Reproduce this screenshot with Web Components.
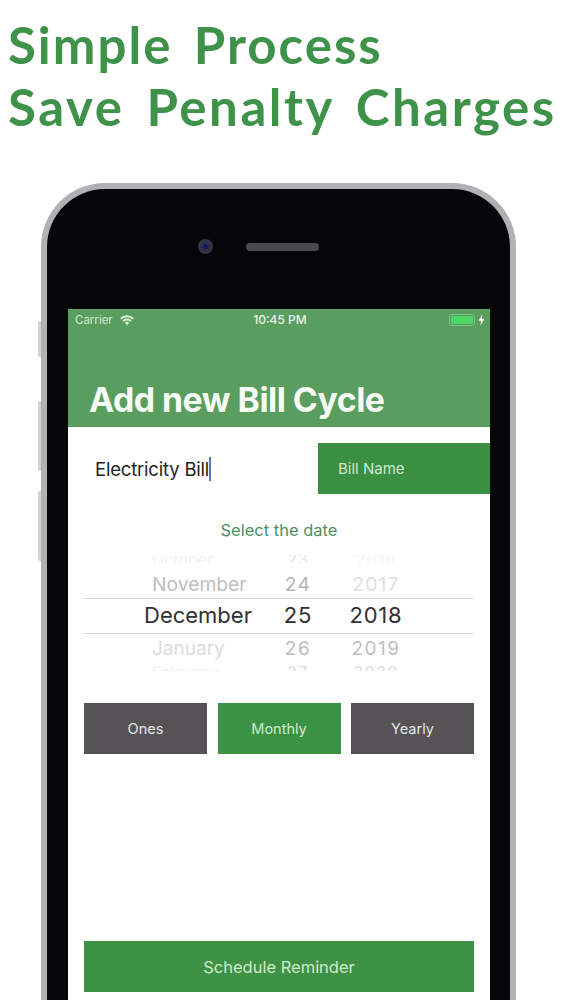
<!DOCTYPE html>
<html>
<head>
<meta charset="utf-8">
<title>Add new Bill Cycle</title>
<style>
  html, body { margin: 0; height: 1000px; overflow: hidden; background: #fff; font-family: Inter, "Liberation Sans", sans-serif; }
</style>
</head>
<body>
<promo-headline>
  <span>Simple Process</span>
  <span class="long">Save Penalty Charges</span>
</promo-headline>
<phone-frame>
  <status-bar></status-bar>
  <title-bar>Add new Bill Cycle</title-bar>
  <name-row value="Electricity Bill" label="Bill Name"></name-row>
  <date-picker label="Select the date"></date-picker>
  <repeat-choice>
    <choice-button>Ones</choice-button>
    <choice-button active>Monthly</choice-button>
    <choice-button>Yearly</choice-button>
  </repeat-choice>
  <schedule-button>Schedule Reminder</schedule-button>
</phone-frame>

<script>
// headline above the phone
class PromoHeadline extends HTMLElement {
    constructor() {
        super();
        this.attachShadow({ mode: "open" });
        this.shadowRoot.innerHTML = `
            <style>
                :host {
                    display: block;
                    height: 183px;
                    box-sizing: border-box;
                    padding: 14px 0 0 8px;
                    color: #3f9249;
                    font: 700 51px/62px Lato, "Liberation Sans", sans-serif;
                    letter-spacing: 2px;
                    word-spacing: 7px;
                }
                ::slotted(span) { display: block; white-space: nowrap; }
                ::slotted(.long) { letter-spacing: 2.55px; }
            </style>
            <slot></slot>
        `;
    }
}

class PhoneFrame extends HTMLElement {
    constructor() {
        super();
        this.attachShadow({ mode: "open" });
        this.shadowRoot.innerHTML = `
            <style>
                :host {
                    display: block;
                    position: relative;
                    width: 475px;
                    height: 817px;
                    margin-left: 41px;
                    box-sizing: border-box;
                    border: 6px solid #b1b0b4;
                    border-bottom: 0;
                    border-radius: 64px 64px 0 0;
                    background: #060608;
                }
                .bezel {
                    height: 120px;
                    display: flex;
                    align-items: center;
                    padding: 0 0 5px 151px;
                    box-sizing: border-box;
                    gap: 33px;
                }
                .cam {
                    width: 15px;
                    height: 15px;
                    border-radius: 50%;
                    background: radial-gradient(circle, #14146a 0 2px, #2c2d48 3px, #35364a 7px);
                }
                .speaker { width: 73px; height: 8px; border-radius: 4px; background: #4a4a4e; }
                .screen {
                    width: 422px;
                    height: 691px;
                    margin-left: 21px;
                    background: #fff;
                    display: flex;
                    flex-direction: column;
                }
                .side { position: absolute; left: -9px; width: 3px; background: #d2d1d5; border-radius: 2px 0 0 2px; }
            </style>
            <div class="side" style="top:132px;height:36px"></div>
            <div class="side" style="top:212px;height:70px"></div>
            <div class="side" style="top:302px;height:70px"></div>
            <div class="bezel"><div class="cam"></div><div class="speaker"></div></div>
            <div class="screen"><slot></slot></div>
        `;
    }
}

class StatusBar extends HTMLElement {
    constructor() {
        super();
        this.attachShadow({ mode: "open" });
        this.shadowRoot.innerHTML = `
            <style>
                :host {
                    display: grid;
                    grid-template-columns: 1fr auto 1fr;
                    align-items: center;
                    height: 21px;
                    padding: 0 5px 0 7px;
                    background: #5a9e5f;
                    color: #cfe9cf;
                    font: 11.5px Inter, "Liberation Sans", sans-serif;
                }
                .left, .right { display: flex; align-items: center; }
                .left { gap: 7px; }
                .right { justify-content: flex-end; gap: 3px; }
                .time { color: #e8f4e8; font-weight: 500; font-size: 12px; }
                .batt {
                    width: 26px;
                    height: 12px;
                    box-sizing: border-box;
                    border: 1px solid #74c280;
                    border-radius: 3px;
                    padding: 1px;
                    display: flex;
                }
                .batt i { flex: 1; background: #4fd667; border-radius: 2px; }
            </style>
            <div class="left">
                <span>Carrier</span>
                <svg width="14" height="10" viewBox="0 0 14 10" fill="none" stroke="#e0f4e0" stroke-width="2">
                    <path d="M.8 3.7a8.8 8.8 0 0 1 12.4 0"/>
                    <path d="M3.2 6a5.4 5.4 0 0 1 7.6 0"/>
                    <path d="M7 10 4.9 7.9a3 3 0 0 1 4.2 0z" fill="#e0f4e0" stroke="none"/>
                </svg>
            </div>
            <span class="time">10:45 PM</span>
            <div class="right">
                <div class="batt"><i></i></div>
                <svg width="7" height="12" viewBox="0 0 6 10"><path d="M3.8 0 .4 5.6h2.2L2 10l3.6-6H3.3z" fill="#eef8ee"/></svg>
            </div>
        `;
    }
}

class TitleBar extends HTMLElement {
    constructor() {
        super();
        this.attachShadow({ mode: "open" });
        this.shadowRoot.innerHTML = `
            <style>
                :host {
                    display: flex;
                    align-items: flex-end;
                    height: 97px;
                    box-sizing: border-box;
                    padding: 0 0 6px 21px;
                    background: #5a9e5f;
                    color: #f6fbf5;
                    font: 700 33.8px/42px Inter, "Liberation Sans", sans-serif;
                    letter-spacing: -.5px;
                }
            </style>
            <slot></slot>
        `;
    }
}

class NameRow extends HTMLElement {
    constructor() {
        super();
        this.attachShadow({ mode: "open" });
        this.shadowRoot.innerHTML = `
            <style>
                :host {
                    display: flex;
                    height: 51px;
                    margin-top: 16px;
                    font-family: Inter, "Liberation Sans", sans-serif;
                }
                .field {
                    width: 250px;
                    box-sizing: border-box;
                    padding-left: 27px;
                    display: flex;
                    align-items: center;
                    color: #1d1d22;
                    font-size: 18.5px;
                    letter-spacing: -.2px;
                }
                .caret { width: 2px; height: 24px; margin-left: 0; background: #5b70c4; }
                .label {
                    flex: 1;
                    display: flex;
                    align-items: center;
                    padding-left: 20px;
                    background: #3b8f43;
                    color: #cfe9d0;
                    font-size: 15px;
                }
            </style>
            <div class="field"><span>${this.getAttribute("value")}</span><span class="caret"></span></div>
            <div class="label">${this.getAttribute("label")}</div>
        `;
    }
}

// one line of the wheel, cols are month / day / year
class PickerRow extends HTMLElement {
    constructor() {
        super();
        this.attachShadow({ mode: "open" });
        const [m, d, y] = this.getAttribute("cells").split(",");
        this.shadowRoot.innerHTML = `
            <style>
                :host {
                    display: grid;
                    grid-template-columns: 175px 78px 78px;
                    align-items: center;
                    text-align: center;
                    height: var(--h, 32px);
                    overflow: hidden;
                    font-size: var(--size, 19px);
                }
                span { white-space: nowrap; transform: translateY(var(--ty, 0)); }
                .m { color: var(--mc, #333); text-align: left; padding-left: var(--ml, 68px); }
                .d { color: var(--dc, #333); letter-spacing: var(--ls, 0); }
                .y { color: var(--yc, #333); letter-spacing: var(--ls, 0); }
            </style>
            <span class="m">${m}</span><span class="d">${d}</span><span class="y">${y}</span>
        `;
    }
}

class DatePicker extends HTMLElement {
    constructor() {
        super();
        this.attachShadow({ mode: "open" });
        this.shadowRoot.innerHTML = `
            <style>
                :host {
                    display: block;
                    margin: 24px 16px 0;
                    font-family: Inter, "Liberation Sans", sans-serif;
                }
                .cap { height: 24px; line-height: 24px; text-align: center; color: #4b9062; font-size: 16.5px; }
                .wheel { margin-top: 13px; height: 116px; overflow: hidden; }
                picker-row { display: grid; }
                .clip-t { --h: 8px; --size: 16px; --mc: #f3f3f5; --dc: #e2e2e4; --yc: #f4f4f6; --ls: 1px; --ty: -6px; margin-bottom: 4px; align-items: start; }
                .n1 { --h: 28px; --size: 19.3px; --mc: #bdbdc1; --dc: #b3b3b6; --yc: #dfdfe2; --ls: 1.2px; padding-top: 3px; }
                .sel {
                    --h: 32px;
                    --size: 22px;
                    --mc: #303034; --dc: #303034; --yc: #303034; --ml: 60px; --ls: .8px;
                    padding-bottom: 2px;
                    border-top: 1px solid #d8d8dc;
                    border-bottom: 1px solid #d8d8dc;
                }
                .p1 { --h: 28px; --size: 19px; --mc: #dcdce0; --dc: #bcbcc0; --yc: #bfbfc3; --ls: 1.5px; }
                .clip-b { --h: 9px; --size: 16px; --mc: #f1f1f3; --dc: #dcdcdf; --yc: #dcdcdf; --ls: 1.5px; align-items: start; }
            </style>
            <div class="cap">${this.getAttribute("label")}</div>
            <div class="wheel">
                <picker-row class="clip-t" cells="October,23,2016"></picker-row>
                <picker-row class="n1" cells="November,24,2017"></picker-row>
                <picker-row class="sel" cells="December,25,2018"></picker-row>
                <picker-row class="p1" cells="January,26,2019"></picker-row>
                <picker-row class="clip-b" cells="February,27,2020"></picker-row>
            </div>
        `;
    }
}

class RepeatChoice extends HTMLElement {
    constructor() {
        super();
        this.attachShadow({ mode: "open" });
        this.shadowRoot.innerHTML = `
            <style>
                :host {
                    display: grid;
                    grid-template-columns: repeat(3, 1fr);
                    gap: 10.5px;
                    height: 51px;
                    margin: 32px 16px 0;
                }
            </style>
            <slot></slot>
        `;
    }
}

class ChoiceButton extends HTMLElement {
    constructor() {
        super();
        this.attachShadow({ mode: "open" });
        this.shadowRoot.innerHTML = `
            <style>
                :host {
                    display: flex;
                    align-items: center;
                    justify-content: center;
                    background: #555355;
                    color: #e6e6e6;
                    font: 14.5px Inter, "Liberation Sans", sans-serif;
                }
                :host([active]) { background: #3b9144; color: #cdeccf; }
            </style>
            <slot></slot>
        `;
    }
}

class ScheduleButton extends HTMLElement {
    constructor() {
        super();
        this.attachShadow({ mode: "open" });
        this.shadowRoot.innerHTML = `
            <style>
                :host {
                    display: flex;
                    align-items: center;
                    justify-content: center;
                    height: 51px;
                    margin: auto 16px 8px;
                    background: #3f9145;
                    color: #cdeccf;
                    font: 16.5px Inter, "Liberation Sans", sans-serif;
                }
            </style>
            <slot></slot>
        `;
    }
}

customElements.define("picker-row", PickerRow);
customElements.define("promo-headline", PromoHeadline);
customElements.define("phone-frame", PhoneFrame);
customElements.define("status-bar", StatusBar);
customElements.define("title-bar", TitleBar);
customElements.define("name-row", NameRow);
customElements.define("date-picker", DatePicker);
customElements.define("repeat-choice", RepeatChoice);
customElements.define("choice-button", ChoiceButton);
customElements.define("schedule-button", ScheduleButton);
</script>
</body>
</html>
